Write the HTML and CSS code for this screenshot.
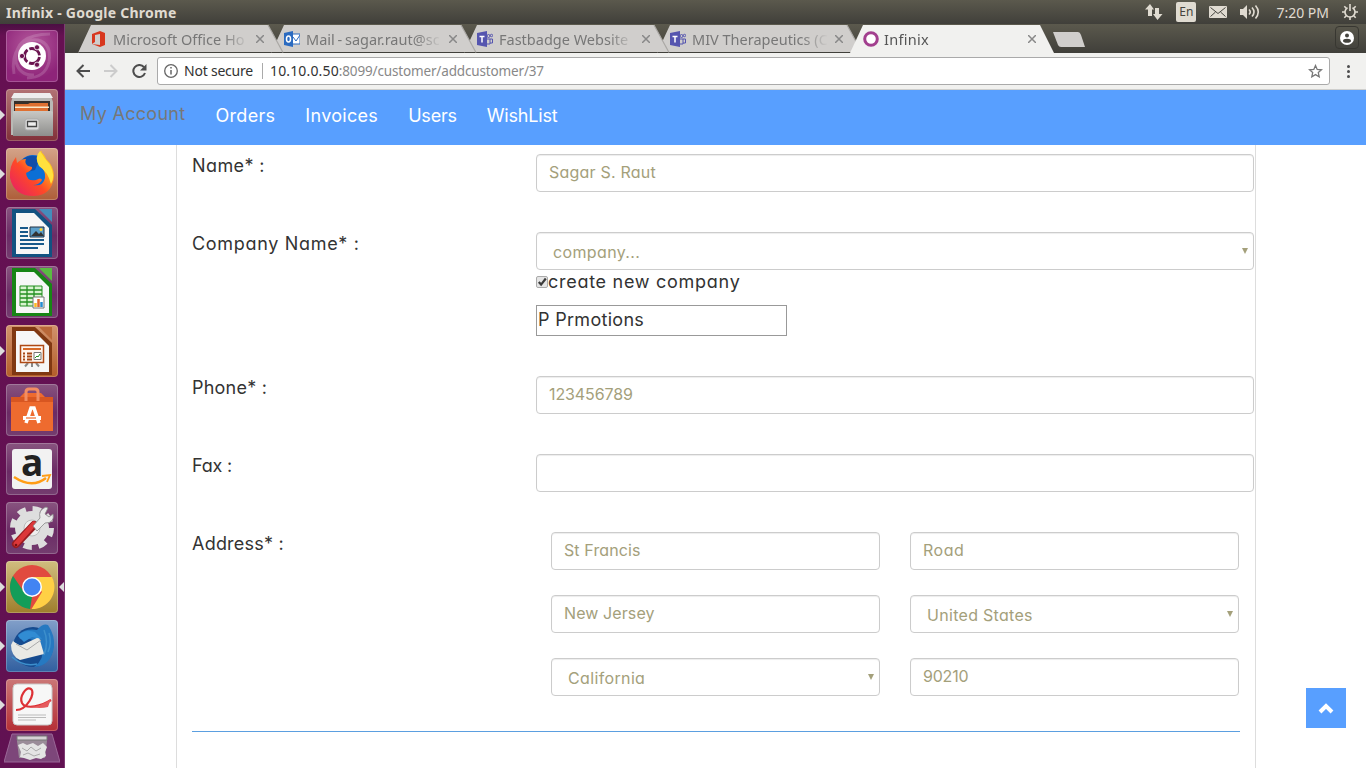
FILE: index.html
```html
<!DOCTYPE html>
<html lang="en"><head><meta charset="utf-8"><title>Infinix</title><link rel="stylesheet" href="styles.css"></head>
<body>
<header class="panel"><span class="t wintitle">Infinix - Google Chrome</span>
<div class="indicators">
<svg class="net" width="18" height="16" viewBox="0 0 18 16"><path d="M5 0 0 5.500h3V12h4V5.500h2zM10 4h4v6h3.500L12.500 16 8 10h2z"/></svg>
<span class="lang">En</span>
<svg width="18" height="12" viewBox="0 0 18 12"><rect width="18" height="12" rx="1"/><path class="cut" d="m1.500 1.500 7.500 6 7.500-6M1.500 10.500l5-4.500m10 4.500-5-4.500"/></svg>
<svg width="20" height="16" viewBox="0 0 20 16"><path d="M0 5h3l4-4v14l-4-4H0z"/><path class="arc" d="M9 5.500q2.500 2.500 0 5M12 3.500q4 4.500 0 9M15.500 1.500q5.500 6.500 0 13"/></svg>
<span class="t clock">7:20 PM</span>
<svg width="16" height="16" viewBox="0 0 16 16"><path class="arc" d="M5.500 3.700a5 5 0 1 0 5 0M8 0v7"/><path class="arc" d="M8 13v3M0 8h3M13 8h3M2.300 2.300l2 2M13.700 2.300l-2 2M2.300 13.700l2-2M13.700 13.700l-2-2"/></svg>
</div></header>
<div class="desktop">
<aside class="launcher">
<div class="tile ubuntu"><svg viewBox="0 0 52 52"><path class="swirl" d="M8 44C4 20 18 8 32 10q14 4 11 22-4 16-22 16M44 4C20 4 8 14 10 32q4 14 18 13"/><circle cx="26" cy="26" r="14" fill="#fff"/><circle cx="26" cy="26" r="7.500" fill="none" stroke="#6b1450" stroke-width="2.800" stroke-dasharray="13.700 2" stroke-dashoffset="-1"/><g fill="#6b1450" stroke="#fff" stroke-width=".8"><circle cx="16" cy="26" r="2.600"/><circle cx="31" cy="17.300" r="2.600"/><circle cx="31" cy="34.700" r="2.600"/></g></svg></div>
<div class="tile files on"><svg viewBox="0 0 52 52"><path d="M8 4h36l3 9v33H5V13z" fill="#b9b9b5"/><path d="M8 4h36l3 5H5z" fill="#eee"/><path d="M8 12h36v12H8z" fill="#36302b"/><path d="M9 15h13l2-1h18v9H9z" fill="#df7031"/><path d="M9 17.500h34v1.500H9z" fill="#fbe8c8"/><path d="M7 22h38l2 1v24H7z" fill="url(#steel)"/><rect x="19" y="30" width="14" height="11" rx="2" fill="#ddd" stroke="#aaa"/><path d="M21.500 32.500h9v5h-9z" fill="#eee" stroke="#444" stroke-width="1.300"/><defs><linearGradient id="steel" x2="0" y2="1"><stop stop-color="#c8c8c5"/><stop offset="1" stop-color="#8e8e8c"/></linearGradient></defs></svg></div>
<div class="tile firefox on"><svg viewBox="0 0 52 52"><defs><linearGradient id="fx" x1="0" y1="1" x2="1" y2="0"><stop stop-color="#e3196f"/><stop offset=".45" stop-color="#ff4a26"/><stop offset=".8" stop-color="#ffc51a"/></linearGradient></defs><circle cx="27" cy="23" r="16" fill="#0c6fd5"/><path d="M17 11q8-6 17-1l-5 12-8 2z" fill="#104eaa"/><path d="M34 3q5 4 6 8 8 7 8 18-2 18-20 19Q8 48 4 30 3 18 10 9l1 6q4-4 9-4-2 4 2 7l4 1q1 3-6 6 1 9 10 7 5-3 6 0-3 5-9 5 10 2 12-7 1-8-6-13-3-8 3-14z" fill="url(#fx)"/><path d="M34 3q4 7 10 14 6 11 1 19-3-12-12-18-5-9 1-15" fill="#ffe13d"/></svg></div>
<div class="tile doc writer"><svg viewBox="0 0 52 52"><path d="M6 2h23l17 16v32H6z" fill="#125281"/><path d="M33 2h13v13z" fill="#448dbb"/><path d="M10 6h18l15 15v26H10z" fill="#f7f7f7"/><path d="M14 21h8m-8 4h8m-8 4h8m-8 4h24m-24 4h24m-24 4h18" stroke="#18598a" stroke-width="2"/><path d="M24 20h14v10H24z" fill="#5ca0cb" stroke="#234" /><path d="m25 29 5-5 3 3 2-2 3 4z" fill="#333"/><circle cx="35" cy="22.500" r="1.500" fill="#ffd12c"/></svg></div>
<div class="tile doc calc"><svg viewBox="0 0 52 52"><path d="M6 2h23l17 16v32H6z" fill="#178515"/><path d="M33 2h13v13z" fill="#5abb42"/><path d="M10 6h18l15 15v26H10z" fill="#f7f7f7"/><path d="M14 20h22v20H14z" fill="#d9f3d0" stroke="#249020"/><path d="M14 24h22m-22 4h22m-22 4h22m-22 4h22M21 20v20m7-20v20" stroke="#249020" stroke-width="1.300"/><path d="M27 31h11v11H27z" fill="#fff" stroke="#777"/><path d="M29.500 41v-4" stroke="#fdba22" stroke-width="2.500"/><path d="M32.500 41v-8" stroke="#e1662d" stroke-width="2.500"/><path d="M35.500 41v-5" stroke="#258bd2" stroke-width="2.500"/></svg></div>
<div class="tile doc impress on"><svg viewBox="0 0 52 52"><path d="M6 2h23l17 16v32H6z" fill="#803812"/><path d="M33 2h13v13z" fill="#b96839"/><path d="M10 6h18l15 15v26H10z" fill="#f7f7f7"/><path d="m22 38-3 3.500m11-3.500 3 3.500m-7-3.500v4" stroke="#888" stroke-width="2"/><path d="M14.500 20.500h23v17h-23z" fill="#fff5ee" stroke="#ae4915" stroke-width="1.500"/><path d="M17 24h18" stroke="#d76928" stroke-width="2"/><path d="M17 28.500h2m-2 3h2m-2 3h2m2-6h5m-5 3h5m-5 3h5" stroke="#a64715" stroke-width="2"/><path d="M28 27.500h7v7h-7z" fill="#fff" stroke="#777"/><path d="m29 33 2-2 1 1 2-3" fill="none" stroke="#249020"/></svg></div>
<div class="tile software"><svg viewBox="0 0 52 52"><path d="M5 13h9l4-4h17l4 4h8v34H5z" fill="#ee6b2f"/><path d="M5 13h42v5H5z" fill="#d85621"/><path d="M20 17V8q0-3 3-3h6q3 0 3 3v9" fill="none" stroke="#f28d63" stroke-width="3"/><path d="m20 39 5-15h3l5 15" fill="none" stroke="#fff" stroke-width="3.500"/><path d="M17 34h18" stroke="#fff" stroke-width="4"/><path d="M20 34h10" stroke="#ee6b2f" stroke-width="1.200"/></svg></div>
<div class="tile amazon"><svg viewBox="0 0 52 52"><rect x="6" y="6" width="40" height="40" rx="3" fill="#f2f2f2"/><path d="M8 34q18 12 32 1" fill="none" stroke="#ff9d16" stroke-width="2.500"/><path d="m36 33 8-1-3 7" fill="none" stroke="#ff9d16" stroke-width="1.800"/></svg><b>a</b></div>
<div class="tile settings"><svg viewBox="0 0 52 52"><circle cx="26" cy="26" r="18.500" fill="none" stroke="#ddd" stroke-width="7" stroke-dasharray="8 6.530"/><circle cx="26" cy="26" r="17" fill="#dedede"/><circle cx="26" cy="26" r="8" fill="#eee" stroke="#bbb"/><path d="m10 42 18-19" stroke="#9a1c20" stroke-width="8" stroke-linecap="round"/><path d="m10 42 18-20" stroke="#dc3739" stroke-width="5" stroke-linecap="round"/><path d="m27 24 7-8q-2-8 6-11l2 1-3 6 4 3 4-3q2 9-8 9l-8 8z" fill="#e9e9e9" stroke="#888" stroke-width=".8"/><circle cx="10" cy="43" r="1.300" fill="#711"/></svg></div>
<div class="tile chrome on focus"><svg viewBox="0 0 52 52"><circle cx="26" cy="26" r="22" fill="#e14a3f"/><path d="M7 15 18 31 26 36 24 48A22 22 0 0 1 7 15" fill="#139d59"/><path d="M26 16h20a22 22 0 0 1-20.500 32L36 31z" fill="#ffd045"/><circle cx="26" cy="26" r="10" fill="#fff"/><circle cx="26" cy="26" r="8.500" fill="#4284f3"/></svg></div>
<div class="tile bird on"><svg viewBox="0 0 52 52"><circle cx="27" cy="27" r="20" fill="#164b8f"/><path d="M12 15q8-7 19-5 6-7 11-5 7 10 6 22-3 19-20 20 11-8 8-19-8-12-22-9z" fill="#2679c1"/><path d="M7 21q6 5 9 4l17-8 5 17-24 6Q5 36 5 25z" fill="#e9e9e5"/><path d="m10 24 11 6 14-10" fill="none" stroke="#aaa"/><path d="M12 16q6-7 17-4l7 7-10-2-8 5z" fill="#318cd3"/><path d="M38 10q5 12 0 25m5-22q3 10-1 19M6 37q11 10 25 7" fill="none" stroke="#3d8fcc" stroke-width="1.500"/></svg></div>
<div class="tile pdf on"><svg viewBox="0 0 52 52"><rect x="7" y="5" width="39" height="41" rx="4" fill="#f7f7f7" stroke="#c9c9c9"/><path d="M10 31C21 31 30 14 25 10c-5-3-12 8-9 14 4 7 20 3 29-3" fill="none" stroke="#dd3136" stroke-width="2.200"/><path d="M24 28q12-1 21-8-2 5-3 8-8 2-18 0" fill="#e55a5d"/><path d="M12 36h28m-28 2.500h28M12 41h18" stroke="#bbb"/></svg></div>
<svg class="trash" width="56" height="30" viewBox="0 0 56 30"><path d="M8 1h40l8 28H0z" fill="#7d467a" stroke="#9a6797"/><path d="M13 3h30v5l-2 17H15L13 8z" fill="#9a8c99"/><path d="M13 3h30v4H13z" fill="#d5d2d4" stroke="#777"/><path d="m14 12 5-2 4 2 6-2 5 3 5-3 4 4-2 5 1 4-5 3-5-1-6 2-6-2-4-1 1-5z" fill="#e4e4e4"/><path d="m18 15 5 3 4-4 5 4 5-3M19 22l5-2 6 3 6-2" fill="none" stroke="#aaa"/></svg>
</aside>
<main class="browser">
<div class="tabs">
<div class="tab"><svg class="shape" viewBox="0 0 207 29"><path d="M0 29 13 1H190L205 28H0"/><path class="edge" d="m190 1 15 27.500"/></svg><svg class="fav" viewBox="0 0 16 16"><path d="M1 3 9 0l5 2v12l-5 2-8-3 8 1V3L4 4v7l-3 2z" fill="#d8371e"/></svg><span class="t ttl">Microsoft Office Ho</span><svg class="x" viewBox="0 0 8 8"><path d="m0 0 8 8M8 0 0 8"/></svg></div>
<div class="tab"><svg class="shape" viewBox="0 0 207 29"><path d="M0 29 13 1H190L205 28H0"/><path class="edge" d="m190 1 15 27.500"/></svg><svg class="fav" viewBox="0 0 16 16"><path d="M7 3h9v10H7z" fill="#fff" stroke="#2b6bc0"/><path d="m9 6 3 4 4-6" fill="none" stroke="#2b6bc0"/><path d="m0 2 9-2v16l-9-2z" fill="#2b6bc0"/><ellipse cx="4.500" cy="8" rx="2" ry="3" fill="none" stroke="#fff" stroke-width="1.500"/></svg><span class="t ttl mail">Mail - sagar.raut@sc</span><svg class="x" viewBox="0 0 8 8"><path d="m0 0 8 8M8 0 0 8"/></svg></div>
<div class="tab"><svg class="shape" viewBox="0 0 207 29"><path d="M0 29 13 1H190L205 28H0"/><path class="edge" d="m190 1 15 27.500"/></svg><svg class="fav" viewBox="0 0 16 16"><path d="m0 2 10-2v16L0 14z" fill="#5555af"/><path d="M2.500 5.500h5m-2.500 0v6" stroke="#fff" stroke-width="1.500"/><g fill="none" stroke="#5555af"><circle cx="11.500" cy="5" r="1.500"/><circle cx="14.500" cy="4.500" r="1.200"/><path d="M10 8h3v5h-3M13 8h2.500v4H13"/></g></svg><span class="t ttl">Fastbadge Website</span><svg class="x" viewBox="0 0 8 8"><path d="m0 0 8 8M8 0 0 8"/></svg></div>
<div class="tab"><svg class="shape" viewBox="0 0 207 29"><path d="M0 29 13 1H190L205 28H0"/><path class="edge" d="m190 1 15 27.500"/></svg><svg class="fav" viewBox="0 0 16 16"><path d="m0 2 10-2v16L0 14z" fill="#5555af"/><path d="M2.500 5.500h5m-2.500 0v6" stroke="#fff" stroke-width="1.500"/><g fill="none" stroke="#5555af"><circle cx="11.500" cy="5" r="1.500"/><circle cx="14.500" cy="4.500" r="1.200"/><path d="M10 8h3v5h-3M13 8h2.500v4H13"/></g></svg><span class="t ttl">MIV Therapeutics (C</span><svg class="x" viewBox="0 0 8 8"><path d="m0 0 8 8M8 0 0 8"/></svg></div>
<div class="tab active"><svg class="shape" viewBox="0 0 207 29"><path d="M0 29 13 1H190L204 29z"/></svg><svg class="fav" viewBox="0 0 16 16"><circle cx="8" cy="8" r="6.300" fill="#fff" stroke="#a23f8e" stroke-width="3"/></svg><span class="t ttl">Infinix</span><svg class="x" viewBox="0 0 8 8"><path d="m0 0 8 8M8 0 0 8"/></svg></div>
<svg class="newtab" width="33" height="16" viewBox="0 0 33 16"><path d="M1 0h25q2 0 3 3l4 12H9Q7 15 6 13z"/></svg>
<div class="profile"><svg width="14" height="14" viewBox="0 0 14 14"><circle cx="7" cy="7" r="7" fill="#fff"/><circle cx="7" cy="4.500" r="2" fill="#45443e"/><ellipse cx="7" cy="9.800" rx="4" ry="2" fill="#45443e"/></svg></div>
</div>
<div class="toolbar">
<svg class="nav-i" width="14" height="14" viewBox="0 0 14 14"><path d="M14 7H1.500M7.500 1l-6 6 6 6"/></svg>
<svg class="nav-i off" width="14" height="14" viewBox="0 0 14 14"><path d="M0 7h12.500M6.500 1l6 6-6 6"/></svg>
<svg class="nav-i" width="15" height="14" viewBox="0 0 15 14"><path d="M12 3.200A6 6 0 1 0 13 9"/><path d="M14.500 0v6.500H8z" class="solid"/></svg>
<div class="omni"><svg width="14" height="14" viewBox="0 0 14 14"><circle cx="7" cy="7" r="6.300" fill="none" stroke="#666" stroke-width="1.300"/><path d="M7 6v4.500M7 3v1.600" stroke="#666" stroke-width="1.500"/></svg><span class="t sec">Not secure</span><i></i><span class="t host">10.10.0.50</span><span class="t path">:8099/customer/addcustomer/37</span><svg class="star" width="15" height="14" viewBox="0 0 15 14"><path d="m7.500 1.500 1.700 3.900 4.300.4-3.200 2.800.9 4.200-3.700-2.200-3.700 2.200.9-4.200-3.200-2.800 4.300-.4z"/></svg></div>
<svg class="dots" width="3" height="13" viewBox="0 0 3 13"><circle cx="1.500" cy="1.500" r="1.500"/><circle cx="1.500" cy="6.500" r="1.500"/><circle cx="1.500" cy="11.500" r="1.500"/></svg>
</div>
<nav class="sitenav"><span class="t brand">My Account</span><span class="t n1">Orders</span><span class="t n2">Invoices</span><span class="t n3">Users</span><span class="t n4">WishList</span></nav>
<section class="page"><div class="form">
<div class="row"><label class="t l1">Name* :</label><div class="input"><span class="t v1">Sagar S. Raut</span></div></div>
<div class="row"><label class="t l2">Company Name* :</label><div><div class="input select"><span class="t v2">company...</span></div><div class="check"><svg width="12" height="12" viewBox="0 0 12 12"><rect x=".5" y=".5" width="11" height="11" rx="1.500" fill="#e5e5e5" stroke="#aaa"/><path d="m2.800 6 2.300 2.600L9.800 2.500" fill="none" stroke="#3b3b3b" stroke-width="2.200"/></svg><span class="t c1">create new company</span></div><div class="plain"><span class="t c2">P Prmotions</span></div></div></div>
<div class="row"><label class="t l3">Phone* :</label><div class="input"><span class="t v3">123456789</span></div></div>
<div class="row"><label class="t l4">Fax :</label><div class="input"></div></div>
<div class="row"><label class="t l5">Address* :</label><div class="address"><div class="input"><span class="t v4">St Francis</span></div><div class="input"><span class="t v5">Road</span></div><div class="input"><span class="t v6">New Jersey</span></div><div class="input select"><span class="t v7">United States</span></div><div class="input select"><span class="t v8">California</span></div><div class="input"><span class="t v9">90210</span></div></div></div>
<hr></div>
<a class="totop"><svg width="16" height="11" viewBox="0 0 16 11"><path d="m2 9 6-6 6 6"/></svg></a>
</section></main></div>
</body></html>
```
FILE: styles.css
```css
*{box-sizing:border-box}
body{margin:0;width:1366px;height:768px;overflow:hidden;background:#fff;font-family:"Noto Sans",sans-serif;display:flex;flex-direction:column}
svg{display:block;flex:none}
.t{white-space:pre}
.panel{height:24px;flex:none;background:linear-gradient(#5b594d,#403f3a);display:flex;justify-content:space-between;align-items:center;padding:0 8px 0 6px;color:#e0dbd1}
.wintitle{font-size:14px;letter-spacing:.25px;font-weight:700}
.indicators{display:flex;align-items:center;fill:#e0dbd1}
.indicators>*{margin-left:13px}
.lang{width:20px;height:20px;border-radius:2px;background:#e0dbd1;color:#45443e;font-size:12px;line-height:20px;text-align:center}
.indicators .clock{font-size:14px;margin-left:16px}
.cut{fill:none;stroke:#45443e}
.arc{fill:none;stroke:#e0dbd1;stroke-width:1.600}
.desktop{display:flex;flex:1;min-height:0}
.launcher{width:65px;flex:none;background:linear-gradient(#4b0f43,#661052 12px,#611152);border-right:1px solid #7d3a72;padding:6px 6px 0;display:flex;flex-direction:column;gap:7px}
.tile{position:relative;width:52px;height:52px;flex:none;border-radius:4px;background:linear-gradient(#88547f,#6b2b65 55%,#743d6f);box-shadow:inset 0 0 0 1px #ffffff38}
.tile svg{width:52px;height:52px}
.ubuntu{background:radial-gradient(circle at 50% 30%,#b55a9d,#8e2479 75%)}
.swirl{fill:none;stroke:#ffffff28;stroke-width:3}
.files{background:linear-gradient(#b27375,#813039)}
.firefox{background:linear-gradient(#d4a388,#ae5e39)}
.impress{background:linear-gradient(#d2936d,#b35d29)}
.chrome{background:linear-gradient(#d1bd7f,#9e7e2c)}
.bird{background:linear-gradient(#829fc9,#315f9f)}
.pdf{background:linear-gradient(#cb7777,#b52e35)}
.on::before{content:"";position:absolute;left:-6px;top:21px;border:5px solid transparent;border-left-color:#ddd;border-right:0}
.focus::after{content:"";position:absolute;right:-6px;top:21px;border:5px solid transparent;border-right-color:#ddd;border-left:0}
.amazon b{position:absolute;left:15px;top:-1px;font:700 37px/40px "Open Sans",sans-serif;color:#222}
.trash{margin:-5px 0 0 -2px}
.browser{flex:1;min-width:0;display:flex;flex-direction:column}
.tabs{height:29px;flex:none;background:linear-gradient(#5b594d,#403f3a);padding-left:13px;display:flex;position:relative}
.tab{position:relative;width:207px;height:29px;margin-right:-14px;flex:none;display:flex;align-items:center;padding-left:13px;z-index:1}
.tab:nth-child(1){z-index:4}.tab:nth-child(2){z-index:3}.tab:nth-child(3){z-index:2}
.tab.active{z-index:5}
.shape{position:absolute;left:0;top:0;width:207px;height:29px;fill:#d0cecc}
.active .shape{fill:#f1f1ef}
.edge{fill:none;stroke:#aaa8a5;stroke-width:1.200}
.fav{position:relative;width:16px;height:16px}
.ttl{position:relative;width:138px;margin-left:6px;overflow:hidden;font-size:14.500px;color:#777;line-height:20px;-webkit-mask-image:linear-gradient(90deg,#000 110px,transparent 136px)}
.mail{word-spacing:-1px}
.active .ttl{color:#555;margin:0 1px 0 5px;letter-spacing:.3px}
.x{position:relative;width:8px;height:8px;margin-left:5px;stroke:#888;stroke-width:1.500}
.newtab{fill:#d0cecc;margin:8px 0 0 9px}
.profile{width:24px;height:23px;margin:2px 7px 0 auto;border:1px solid #383731;border-radius:4px;display:flex;align-items:center;justify-content:center}
.toolbar{height:37px;flex:none;background:#f1f1ef;border-bottom:1px solid #cfcfcd;display:flex;align-items:center;padding:0 16px 0 11px}
.nav-i{margin-right:14px;fill:none;stroke:#4d4d4d;stroke-width:2}
.off{stroke:#ccc}
.solid{fill:#4d4d4d;stroke:none}
.omni{width:1173px;height:28px;margin-left:-4px;border:1px solid #aaa;border-radius:3px;background:#fff;display:flex;align-items:center;padding:0 6px;font-size:14px;color:#333}
.omni .t{padding-bottom:1px}
.sec{margin-left:6px;letter-spacing:-.22px}
.omni i{width:1px;height:16px;background:#aaa;margin:0 7px 0 9px}
.host{letter-spacing:.15px}
.path{color:#888;font-size:13.500px;letter-spacing:-.15px}
.star{margin-left:auto;fill:none;stroke:#777;stroke-width:1.300}
.dots{margin-left:17px;fill:#4d4d4d}
.sitenav{height:55px;flex:none;background:#589fff;color:#fff;display:flex;align-items:center;gap:30px;padding:0 15px 4px}
.sitenav,.page{font-family:Inter,sans-serif;font-size:18px;font-feature-settings:"cv11"}
.brand{color:#777;letter-spacing:.3px;padding-bottom:4px}
.n1,.n2,.c2,.v7{letter-spacing:.3px}
.n3,.n4,.l4,.v9{letter-spacing:-.2px}
.l1{letter-spacing:.4px}
.l2{letter-spacing:.68px}
.l3,.l5,.v1{letter-spacing:.22px}
.c1{letter-spacing:.72px}
.v2,.v8{letter-spacing:.36px}
.v3{letter-spacing:-.1px}
.v5{letter-spacing:.5px}
.v4,.v6{letter-spacing:.1px}
.page{position:relative;flex:1;min-height:0}
.form{width:1080px;height:100%;margin-left:111px;border:solid #ddd;border-width:0 1px;padding:9px 0 0 15px;display:flex;flex-direction:column;gap:40px}
.row{display:grid;grid-template-columns:344px 718px}
.row label{color:#333;line-height:24px}
.input{height:38px;border:1px solid #ccc;border-radius:4px;box-shadow:inset 0 1px 1px #00000013;padding:0 12px;line-height:35px;font-size:16px;color:#a4a07b}
.select{position:relative;padding-left:16px;line-height:38px}
.select::after{content:"";position:absolute;right:5px;top:15px;border:3px solid transparent;border-top:6px solid #a4a07b;border-bottom:0}
.check{display:flex;align-items:center;height:24px;color:#333}
.check svg{margin-top:-1px}
.check .t{padding-bottom:2px}
.plain{width:251px;height:31px;margin-top:11px;border:1px solid #999;padding-left:1px;line-height:28px;color:#333}
.address{display:grid;grid-template-columns:329px 329px;gap:25px 30px;padding-left:15px}
hr{width:1048px;height:1px;border:0;background:#5b9fe0;margin:-5px 0 0}
.totop{position:absolute;left:1241px;top:543px;width:40px;height:40px;background:#589fff;display:grid;place-items:center}
.totop path{fill:none;stroke:#fff;stroke-width:4}
```
